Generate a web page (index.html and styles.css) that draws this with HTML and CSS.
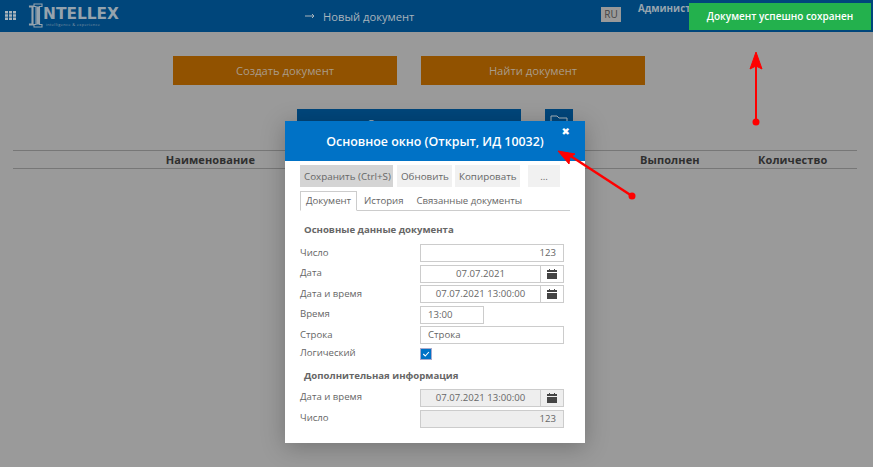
FILE: index.html
```html
<!DOCTYPE html>
<html lang="ru">
<head>
  <meta charset="UTF-8">
  <title>Новый документ</title>
  <link rel="stylesheet" href="styles.css">
</head>
<body>
  <header class="topbar">
    <svg class="apps" viewBox="0 0 11 9" width="11" height="9"><path d="M0 0h3v2.5H0zM4 0h3v2.5H4zM8 0h3v2.5H8zM0 3.3h3v2.4H0zM4 3.3h3v2.4H4zM8 3.3h3v2.4H8zM0 6.5h3V9H0zM4 6.5h3V9H4zM8 6.5h3V9H8z" fill="#a9b4bc"/></svg>
    <div class="logo">
      <svg class="logo-i" viewBox="0 0 15 25" width="15" height="25"><path d="M6 1h8v2.5h-2.5v18H14V24H6v-2.5h2V3.500H6zM5 3H1.500v1H4v17H1.500v1H5z" fill="none" stroke="#95a3ad" stroke-width="1.1"/><path d="M8.500 3.500h3v18h-3z" fill="#95a3ad"/></svg>
      <div class="logo-text">
        <span class="logo-name">NTELLEX</span>
        <span class="logo-tag">intelligence &amp; experience</span>
      </div>
    </div>
    <div class="crumb">
      <svg class="crumb-arrow" viewBox="0 0 10 6" width="10" height="6"><path d="M0 3h9M7 1l2 2-2 2" fill="none" stroke="#a9b4bc" stroke-width="1"/></svg>
      Новый документ
    </div>
    <div class="top-right">
      <span class="lang">RU</span>
      <span class="user">Администратор</span>
    </div>
  </header>

  <main class="page">
    <div class="actions">
      <button class="btn-orange">Создать документ</button>
      <button class="btn-orange">Найти документ</button>
    </div>
    <div class="actions-second">
      <button class="btn-navy">Список заказов</button>
      <button class="btn-folder">
        <svg viewBox="0 0 20 16" width="20" height="16"><path d="M2 14V2h6l2 2h8v10z" fill="none" stroke="#a9b4bc" stroke-width="1"/></svg>
      </button>
    </div>
    <div class="doc-table">
      <span class="col-name">Наименование</span>
      <span></span>
      <span>Выполнен</span>
      <span>Количество</span>
    </div>
  </main>

  <section class="modal">
    <div class="modal-head">
      <h2>Основное окно (Открыт, ИД 10032)</h2>
      <span class="modal-close">✖</span>
    </div>
    <div class="modal-body">
      <div class="toolbar">
        <button class="tool tool-active">Сохранить (Ctrl+S)</button>
        <button class="tool">Обновить</button>
        <button class="tool">Копировать</button>
        <button class="tool tool-more">...</button>
      </div>
      <div class="tabs">
        <span class="tab tab-active">Документ</span>
        <span class="tab">История</span>
        <span class="tab">Связанные документы</span>
      </div>

      <h3 class="group">Основные данные документа</h3>
      <div class="form">
        <label>Число</label>
        <div class="field num">123</div>
        <label>Дата</label>
        <div class="field date"><span>07.07.2021</span><i class="cal"><svg viewBox="0 0 10 10" width="10" height="10"><path d="M0 1h2V0h1v1h4V0h1v1h2v2H0zM0 4h10v6H0z" fill="#444"/></svg></i></div>
        <label>Дата и время</label>
        <div class="field date"><span>07.07.2021 13:00:00</span><i class="cal"><svg viewBox="0 0 10 10" width="10" height="10"><path d="M0 1h2V0h1v1h4V0h1v1h2v2H0zM0 4h10v6H0z" fill="#444"/></svg></i></div>
        <label>Время</label>
        <div class="field short">13:00</div>
        <label>Строка</label>
        <div class="field">Строка</div>
        <label>Логический</label>
        <div class="check"><svg viewBox="0 0 11 11" width="10" height="10"><path d="M2.500 5.500l2.200 2.200 4-4.400" fill="none" stroke="#fff" stroke-width="1.200"/></svg></div>
      </div>

      <h3 class="group group-extra">Дополнительная информация</h3>
      <div class="form form-extra">
        <label>Дата и время</label>
        <div class="field date off"><span>07.07.2021 13:00:00</span><i class="cal"><svg viewBox="0 0 10 10" width="10" height="10"><path d="M0 1h2V0h1v1h4V0h1v1h2v2H0zM0 4h10v6H0z" fill="#444"/></svg></i></div>
        <label>Число</label>
        <div class="field num off">123</div>
      </div>
    </div>
  </section>

  <div class="toast">Документ успешно сохранен</div>

  <!-- стрелки-пометки поверх скриншота -->
  <svg class="marks" viewBox="0 0 873 467" width="873" height="467">
    <g fill="#f00" stroke="#f00">
      <circle cx="756" cy="122" r="3.500" stroke="none"/>
      <path d="M756 122V56" stroke-width="2"/>
      <path d="M756 52l-6 17 6-3 6 3z" stroke-width="1"/>
      <circle cx="632" cy="196" r="3.500" stroke="none"/>
      <path d="M632 196l-66-43" stroke-width="2.500"/>
      <path d="M558 151l17 3-5 3-1 7z" stroke-width="1"/>
    </g>
  </svg>
</body>
</html>
```

FILE: styles.css
```css
* { box-sizing: border-box; margin: 0; padding: 0 }
html, body { height: 100%; overflow: hidden }
body {
  font-family: 'Open Sans', sans-serif;
  font-size: 11px;
  background: #9a9a9a;
  color: #666;
}
button { font-family: inherit; border: none }

.topbar {
  height: 32px;
  background: #00467b;
  display: flex;
  align-items: center;
  padding-left: 5px;
  color: #a9b4bc;
}
.apps { flex: none; margin-top: -2px }
.logo {
  display: flex;
  align-items: flex-start;
  margin-left: 12px;
  width: 91px;
  flex: none;
}
.logo-i { flex: none; margin-top: -1px }
.logo-text {
  display: flex;
  flex-direction: column;
  margin-top: 2px;
}
.logo-name {
  font: bold 15.400px/16px 'DejaVu Sans', sans-serif;
  color: #95a3ad;
}
.logo-tag {
  font: 4px/5px 'Open Sans', sans-serif;
  letter-spacing: .3px;
  color: #7f93a2;
  white-space: nowrap;
  padding-left: 3px;
}
.crumb {
  margin-left: 186px;
  font-size: 11.200px;
  white-space: nowrap;
  flex: none;
  width: 296px;
  display: flex;
  align-items: center;
}
.crumb-arrow { margin-right: 8px }
.top-right {
  display: flex;
  flex: none;
  align-items: flex-start;
  height: 32px;
  padding-top: 7px;
}
.lang {
  width: 20px;
  height: 15px;
  background: #999;
  color: #444;
  font-size: 10px;
  line-height: 15px;
  text-align: center;
}
.user {
  margin-left: 17px;
  margin-top: -3px;
  font-size: 9.800px;
  line-height: 10px;
  font-weight: 700;
  white-space: nowrap;
  color: #97a5af;
}

.page { padding: 24px 16px 0 13px }
.actions, .actions-second {
  display: flex;
  padding-left: 160px;
  gap: 24px;
}
.btn-orange {
  width: 224px;
  height: 29px;
  background: #915200;
  color: #a99c8b;
  font-size: 11.200px;
}
.actions-second { padding-left: 284px; margin-top: 24px }
.btn-navy {
  width: 224px;
  height: 29px;
  background: #00467b;
  color: #a9b4bc;
  font-size: 11.200px;
}
.btn-folder {
  width: 28px;
  height: 28px;
  background: #00467b;
  padding-top: 2px;
}
.doc-table {
  margin-top: 12px;
  height: 19px;
  border-top: 1px solid #777;
  border-bottom: 1px solid #777;
  display: grid;
  grid-template-columns: 242px 385px 118px 1fr;
  align-items: center;
  font-weight: 700;
  font-size: 11px;
  color: #2f2f2f;
  letter-spacing: .1px;
  white-space: nowrap;
}
.col-name { text-align: right }

.modal {
  position: absolute;
  left: 285px;
  top: 121px;
  width: 300px;
  height: 322px;
  background: #fff;
  box-shadow: 0 4px 22px rgba(0,0,0,.25);
}
.modal-head {
  height: 40px;
  background: #0072c6;
  display: flex;
  align-items: center;
  justify-content: center;
  position: relative;
}
.modal-head h2 {
  font-size: 12.400px;
  font-weight: 600;
  color: #fff;
  padding-top: 1px;
}
.modal-close {
  position: absolute;
  right: 15px;
  top: 5px;
  color: #fff;
  font: 10px/12px 'DejaVu Sans', sans-serif;
}
.modal-body { padding: 4px 15px 0 }

.toolbar { display: flex; gap: 3px }
.tool {
  height: 22px;
  background: #f1f1f1;
  color: #666;
  font-size: 9.800px;
  padding: 0 4px;
  white-space: nowrap;
}
.tool-active { width: 93px; background: #d4d4d4; margin-right: 1px }
.tool:nth-child(2) { width: 55px }
.tool:nth-child(3) { width: 65px }
.tool-more { width: 32px; margin-left: 5px }

.tabs {
  display: flex;
  margin-top: 4px;
  height: 20px;
  width: 270px;
  border-bottom: 1px solid #ccc;
}
.tab {
  height: 20px;
  padding: 3px 5px 0;
  margin-right: 3px;
  font-size: 9.600px;
  color: #666;
  white-space: nowrap;
}
.tab-active {
  border: 1px solid #ccc;
  border-bottom: 1px solid #fff;
  width: 57px;
  padding: 2px 0 0 5px;
  margin-right: 2px;
}

.group {
  font-size: 9.600px;
  line-height: 14px;
  font-weight: 700;
  color: #666;
  padding-left: 4px;
  height: 21px;
  margin-top: 12px;
}
.group-extra { margin-top: 9px; height: 20px }

.form {
  display: grid;
  grid-template-columns: 120px 144px;
  row-gap: 2.500px;
  align-items: center;
}
.form-extra { row-gap: 3px }
.form label { font-size: 9.600px; line-height: 12px; margin-top: -1px; color: #666 }
.field {
  height: 18px;
  border: 1px solid #ccc;
  font-size: 9.600px;
  line-height: 16px;
  padding: 0 7px;
  color: #666;
  background: #fff;
}
.num { text-align: right }
.short { width: 64px }
.date { display: flex; padding: 0 }
.date span { flex: 1; text-align: center }
.cal {
  width: 23px;
  flex: none;
  border-left: 1px solid #ccc;
  display: flex;
  align-items: center;
  justify-content: center;
}
.off { background: #eee }
.check {
  width: 12px;
  height: 12px;
  margin-top: 1px;
  background: #0072c6;
  border: 1px solid #aac;
  display: flex;
  align-items: center;
  justify-content: center;
}

.toast {
  position: absolute;
  left: 689px;
  top: 3px;
  width: 182px;
  height: 27px;
  background: #23b14d;
  color: #fff;
  font-size: 10px;
  font-weight: 600;
  line-height: 27px;
  text-align: center;
}
.marks { position: absolute; left: 0; top: 0; pointer-events: none }
```
